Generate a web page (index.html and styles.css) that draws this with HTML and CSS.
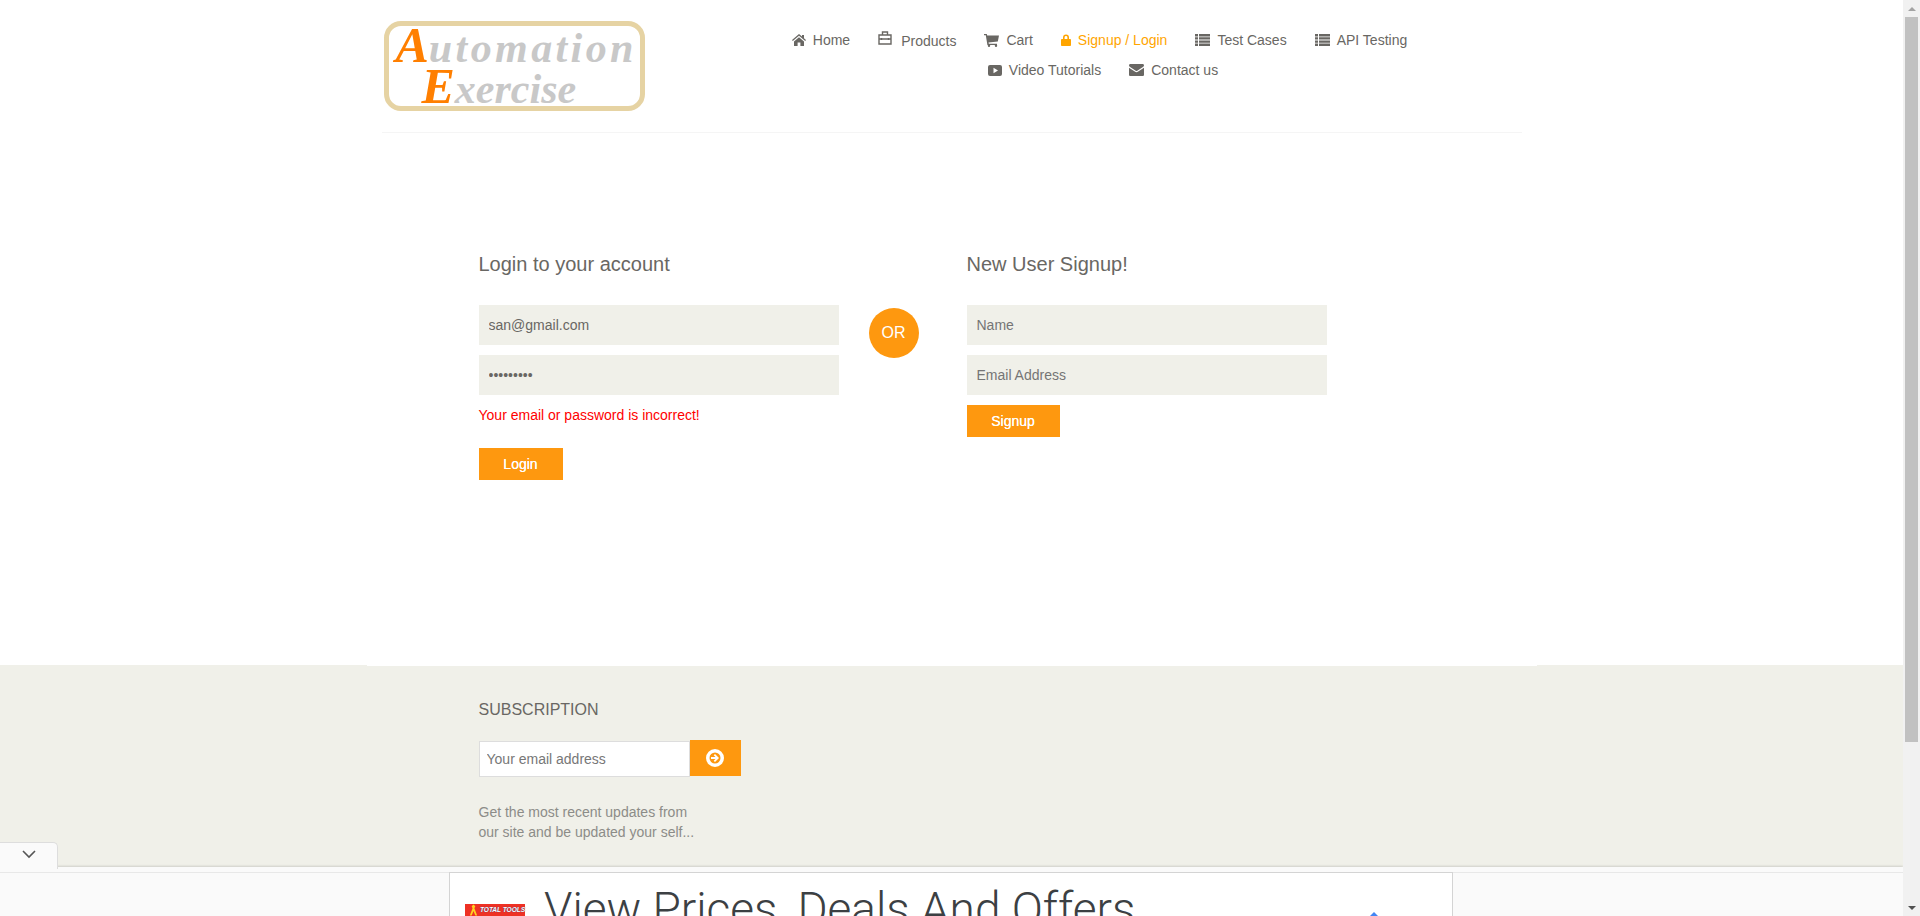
FILE: index.html
```html
<!DOCTYPE html>
<html>
<head>
    <title>Automation Exercise - Signup / Login</title>
    <meta name="viewport" content="width=device-width, initial-scale=1.0">
    <link rel="stylesheet" href="styles.css">
</head>
<body>

<header class="container header">
    <div class="header-row">
        <a class="logo" href="#">
            <span class="logo-line"><b>A</b>utomation</span>
            <span class="logo-line logo-line-two"><b>E</b>xercise</span>
        </a>
        <ul class="nav">
            <li><a href="#">
                <svg class="icon" width="14" height="12" viewBox="0 0 14 12"><path d="M7 0l3 2.5V1h2v3.2L14 6l-.8.9L7 1.8.8 6.9 0 6zM2 7.4l5-4.1 5 4.1V12H8.4V8.6H5.6V12H2z"/></svg>
                Home</a></li>
            <li class="nav-tall"><a href="#">
                <svg class="icon" width="14" height="14" viewBox="0 0 14 14"><path fill="none" stroke="currentColor" stroke-width="1.4" d="M1 4h12v9H1zM1 8h12M4.500 4V1h5v3M3.500 7v2M10.500 7v2"/></svg>
                <span>Products</span></a></li>
            <li><a href="#">
                <svg class="icon" width="15" height="13" viewBox="0 0 15 13"><path d="M0 0h2.800l.4 1.600H15l-1.200 6-9.300 1 .3 1.200H13v1.200H3.400L1.800 1.200H0z"/><circle cx="5" cy="11.800" r="1.200"/><circle cx="12" cy="11.800" r="1.200"/></svg>
                Cart</a></li>
            <li class="active"><a href="#">
                <svg class="icon" width="10" height="12" viewBox="0 0 10 12"><path d="M2 5V3.400a3 3 0 016 0V5h1.200c.4 0 .8.3.8.7v5.600c0 .4-.4.7-.8.7H.8c-.4 0-.8-.3-.8-.7V5.700c0-.4.4-.7.8-.7zm1.600 0h2.800V3.400a1.400 1.400 0 00-2.800 0z"/></svg>
                Signup / Login</a></li>
            <li><a href="#">
                <svg class="icon" width="15" height="12" viewBox="0 0 15 12"><path d="M0 0h3v2.400H0zM4 0h11v2.400H4zM0 3.200h3v2.400H0zM4 3.200h11v2.400H4zM0 6.400h3v2.400H0zM4 6.400h11v2.400H4zM0 9.600h3V12H0zM4 9.600h11V12H4z"/></svg>
                Test Cases</a></li>
            <li><a href="#">
                <svg class="icon" width="15" height="12" viewBox="0 0 15 12"><path d="M0 0h3v2.400H0zM4 0h11v2.400H4zM0 3.200h3v2.400H0zM4 3.200h11v2.400H4zM0 6.400h3v2.400H0zM4 6.400h11v2.400H4zM0 9.600h3V12H0zM4 9.600h11V12H4z"/></svg>
                API Testing</a></li>
            <li class="nav-second"><a href="#">
                <svg class="icon" width="14" height="11" viewBox="0 0 14 11"><path fill-rule="evenodd" d="M2 0h10a2 2 0 012 2v7a2 2 0 01-2 2H2a2 2 0 01-2-2V2a2 2 0 012-2zm3.500 2.800v5.400L10 5.500z"/></svg>
                Video Tutorials</a></li>
            <li><a href="#">
                <svg class="icon" width="15" height="12" viewBox="0 0 15 12"><path d="M1.400 0h12.200c.8 0 1.400.6 1.400 1.300 0 .7-.5 1.400-1.100 1.800L8.300 6.800c-.5.300-1.100.3-1.600 0L1.100 3.100C.5 2.700 0 2 0 1.300 0 .6.600 0 1.400 0zM0 3.800l6.200 4c.8.500 1.800.500 2.600 0l6.200-4v6.900c0 .7-.6 1.300-1.400 1.300H1.400C.6 12 0 11.400 0 10.700z"/></svg>
                Contact us</a></li>
        </ul>
    </div>
</header>

<section class="container main">
    <div class="form-box login-box">
        <h2>Login to your account</h2>
        <input class="field" type="email" value="san@gmail.com" placeholder="Email Address">
        <input class="field" type="password" value="password1" placeholder="Password">
        <p class="error">Your email or password is incorrect!</p>
        <button class="btn btn-login">Login</button>
    </div>
    <div class="or-circle">OR</div>
    <div class="form-box">
        <h2>New User Signup!</h2>
        <input class="field" type="text" placeholder="Name">
        <input class="field" type="email" placeholder="Email Address">
        <button class="btn btn-signup">Signup</button>
    </div>
</section>

<footer class="footer">
    <div class="footer-inner">
        <h2>Subscription</h2>
        <form class="subscribe">
            <input type="email" placeholder="Your email address">
            <button type="button">
                <svg width="18" height="18" viewBox="0 0 18 18"><path fill="#fff" fill-rule="evenodd" d="M9 0a9 9 0 110 18A9 9 0 019 0zm0 3.500a5.500 5.500 0 100 11 5.500 5.500 0 000-11zM9 5l4 4-4 4-1.300-1.300 1.800-1.800H5V8.100h4.500L7.700 6.300z"/></svg>
            </button>
        </form>
        <p>Get the most recent updates from<br>our site and be updated your self...</p>
    </div>
</footer>

<!-- anchored ad at the bottom of the window -->
<div class="ad-bar">
    <div class="ad-tab">
        <svg width="14" height="9" viewBox="0 0 14 9"><path fill="none" stroke="#555" stroke-width="1.600" d="M1 1l6 6 6-6"/></svg>
    </div>
    <div class="ad-box">
        <div class="ad-logo">
            <svg width="12" height="12" viewBox="0 0 12 12"><path fill="#ffd21f" d="M6 0l2 2-1 2 3 8H8L6 7l-2 5H2l3-8-1-2z"/></svg>
            <span>TOTAL TOOLS</span>
        </div>
        <div class="ad-title">View Prices, Deals And Offers</div>
        <svg class="ad-mark" width="18" height="18" viewBox="0 0 18 18"><path fill="#4285f4" d="M9 0l9 9-9 9-9-9z"/></svg>
    </div>
</div>

<div class="scrollbar">
    <div class="scroll-arrow"><i class="arrow-up"></i></div>
    <div class="scroll-thumb"></div>
    <div class="scroll-arrow scroll-arrow-down"><i class="arrow-down"></i></div>
</div>

</body>
</html>
```

FILE: styles.css
```css
html, body {
    height: 916px;
    overflow: hidden;
}
body {
    font-family: "Liberation Sans", Arial, sans-serif;
    font-size: 14px;
    color: #696763;
    margin: 0;
    padding-right: 17px;
    box-sizing: border-box;
    background-color: #fff;
}
a {
    color: inherit;
    text-decoration: none;
}
h2 {
    font-weight: normal;
    margin: 0;
}
.container {
    width: 1140px;
    margin: 0 auto;
}

/* header */
.header {
    padding: 21px 0;
    border-bottom: 1px solid #f5f5f5;
}
.header-row {
    display: flex;
    align-items: flex-start;
}
.logo {
    display: block;
    box-sizing: border-box;
    width: 261px;
    height: 90px;
    margin-left: 2px;
    padding: 0 0 0 7px;
    border: 5px solid #e6d3a3;
    border-radius: 17px;
    font-family: "Liberation Serif", serif;
    font-style: italic;
    font-weight: bold;
    font-size: 42px;
    line-height: 38px;
    letter-spacing: 3.4px;
    color: #c8c8c8;
    white-space: nowrap;
}
.logo b {
    color: #ff7f00;
    font-size: 50px;
    letter-spacing: 0;
}
.logo-line {
    display: block;
}
.logo-line-two {
    padding-left: 26px;
    letter-spacing: 0;
}
.nav {
    display: flex;
    flex-wrap: wrap;
    justify-content: center;
    column-gap: 28px;
    width: 680px;
    margin: 4px 0 0 115px;
    padding: 0;
    list-style: none;
}
.nav a {
    display: flex;
    align-items: center;
    gap: 7px;
    height: 30px;
}
.icon {
    fill: currentColor;
    flex: none;
}
.nav .active a {
    color: #ffa500;
}
.nav-tall .icon {
    margin-top: -5px;
    margin-right: 2px;
}
.nav-tall span {
    padding-top: 2px;
}
.nav-second {
    margin-left: 7px;
}

/* login and signup forms */
.main {
    display: flex;
    align-items: flex-start;
    padding: 119px 0 185px 97px;
    width: 1043px;
}
.form-box {
    width: 360px;
}
.form-box h2 {
    font-size: 20px;
    line-height: 24px;
    margin-bottom: 29px;
}
.field {
    display: block;
    box-sizing: border-box;
    width: 100%;
    height: 40px;
    margin-bottom: 10px;
    padding: 0 10px;
    border: 0;
    background-color: #f0f0e9;
    font-family: inherit;
    font-size: 14px;
    color: #696763;
}
.field::placeholder {
    color: #757575;
}
.error {
    margin: 0 0 23px;
    line-height: 20px;
    color: #f00;
}
.btn {
    display: block;
    height: 32px;
    padding: 0;
    border: 0;
    background-color: #fe980f;
    color: #fff;
    font-family: inherit;
    font-size: 14px;
    text-shadow: 0 0 0.5px #fff;
}
.btn-login {
    width: 84px;
}
.btn-signup {
    width: 93px;
}
.or-circle {
    flex: none;
    width: 50px;
    height: 50px;
    margin: 56px 48px 0 30px;
    border-radius: 50%;
    background-color: #fe980f;
    color: #fff;
    font-size: 16px;
    line-height: 50px;
    text-align: center;
}

/* footer */
.footer {
    height: 260px;
    background-color: #f0f0e9;
}
.footer-inner {
    width: 1170px;
    height: 100%;
    margin: 0 auto;
    padding: 34px 0 0 112px;
    box-sizing: border-box;
    border-top: 1px solid #fff;
}
.footer h2 {
    font-size: 16px;
    line-height: 20px;
    text-transform: uppercase;
}
.subscribe {
    display: flex;
    align-items: flex-start;
    margin: 20px 0 25px;
}
.subscribe input {
    box-sizing: border-box;
    width: 211px;
    height: 36px;
    margin-top: 1px;
    padding: 0 7px;
    border: 1px solid #ddd;
    background-color: #fff;
    font-family: inherit;
    font-size: 14px;
}
.subscribe input::placeholder {
    color: #777;
}
.subscribe button {
    display: flex;
    align-items: center;
    justify-content: center;
    width: 51px;
    height: 36px;
    padding: 0;
    border: 0;
    background-color: #fe980f;
}
.footer p {
    margin: 0;
    line-height: 20px;
    color: #8c8c88;
}

/* ad bar */
.ad-bar {
    position: fixed;
    left: 0;
    right: 17px;
    bottom: 0;
    box-sizing: border-box;
    height: 44px;
    border-top: 1px solid #e8e8e8;
    background-color: #fafafa;
    box-shadow: 0 -5px 0 #fafafa, 0 -6px 2px rgba(0, 0, 0, 0.14);
}
.ad-tab {
    position: absolute;
    left: 0;
    top: -31px;
    display: flex;
    align-items: center;
    justify-content: center;
    box-sizing: border-box;
    width: 58px;
    height: 27px;
    padding-bottom: 3px;
    border-top: 1px solid #ddd;
    border-right: 1px solid #ddd;
    border-radius: 0 5px 0 0;
    background-color: #fafafa;
}
.ad-box {
    position: relative;
    display: flex;
    box-sizing: border-box;
    width: 1004px;
    height: 44px;
    margin: -1px 0 0 449px;
    overflow: hidden;
    border: 1px solid #d4d4d4;
    border-bottom: 0;
    background-color: #fff;
}
.ad-logo {
    flex: none;
    display: flex;
    gap: 1px;
    box-sizing: border-box;
    width: 60px;
    height: 32px;
    margin: 31px 0 0 15px;
    padding-left: 3px;
    background-color: #ee3124;
    font-size: 6.5px;
    font-weight: bold;
    font-style: italic;
    line-height: 12px;
    color: #fff;
    text-shadow: 0 0 1px #1b3a8c;
    white-space: nowrap;
}
.ad-title {
    margin: 11px 0 0 19px;
    font-family: Roboto, sans-serif;
    font-size: 46px;
    font-weight: 300;
    line-height: 50px;
    color: #3c4043;
    white-space: nowrap;
}
.ad-mark {
    position: absolute;
    left: 915px;
    top: 39px;
}

/* window scrollbar */
.scrollbar {
    position: fixed;
    top: 0;
    right: 0;
    bottom: 0;
    display: flex;
    flex-direction: column;
    width: 17px;
    background-color: #f1f1f1;
}
.scroll-arrow {
    display: flex;
    align-items: center;
    justify-content: center;
    height: 17px;
}
.scroll-arrow-down {
    margin-top: auto;
}
.scroll-thumb {
    height: 725px;
    margin: 0 2px;
    background-color: #c1c1c1;
}
.arrow-up {
    border: 4px solid transparent;
    border-top: 0;
    border-bottom: 4px solid #a3a3a3;
}
.arrow-down {
    border: 4px solid transparent;
    border-bottom: 0;
    border-top: 4px solid #505050;
}
```
